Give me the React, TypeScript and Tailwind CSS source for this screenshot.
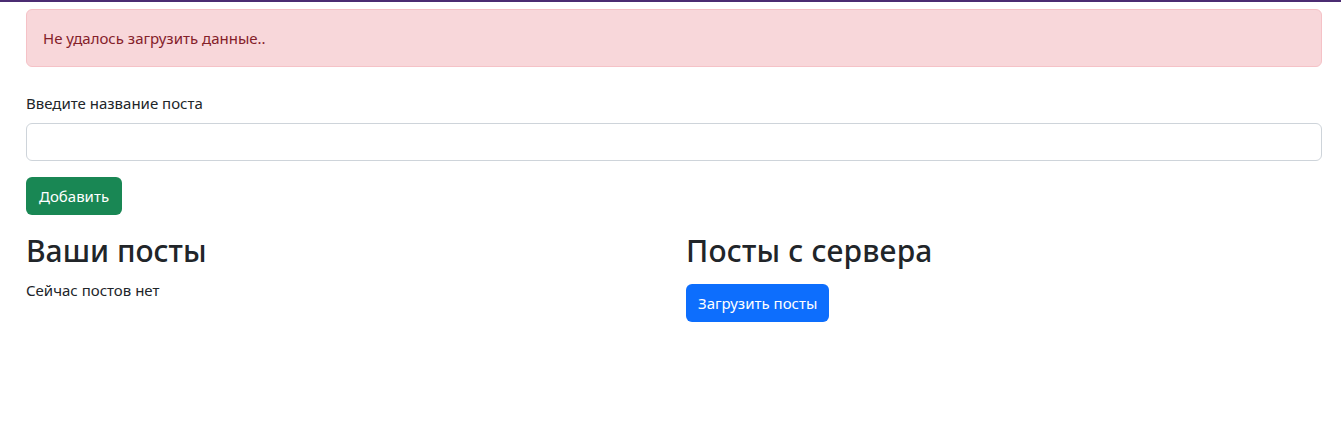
import React from "react";

export default function App() {
  return (
    <div
      className="min-h-[435px] bg-white text-[#212529] text-[15px] leading-6"
      style={{ fontFamily: '"Noto Sans", "Open Sans", sans-serif' }}
    >
      <div className="h-[2px] bg-[#4b2c72]" />
      <div className="pl-[26px] pr-[19px] pt-[7px]">
        <div className="rounded-[6px] border border-[#f5c2c7] bg-[#f8d7da] px-4 py-4 text-[#842029] mb-[16px]">
          Не удалось загрузить данные..
        </div>
        <div className="pt-[8px]">
          <label className="block mb-[8px]">Введите название поста</label>
          <input
            type="text"
            className="block w-full h-[38px] rounded-[6px] border border-[#ced4da] bg-white px-3 outline-none"
          />
          <button className="mt-[16px] h-[38px] rounded-[6px] bg-[#198754] px-[13px] text-white">
            Добавить
          </button>
        </div>
        <div className="mt-[17px] grid grid-cols-2 gap-x-[24px]">
          <div>
            <h2 className="text-[30px] leading-[38px] font-medium mb-[8px]">Ваши посты</h2>
            <p>Сейчас постов нет</p>
          </div>
          <div>
            <h2 className="text-[30px] leading-[38px] font-medium mb-[14px] tracking-[0.2px]">Посты с сервера</h2>
            <button className="h-[38px] rounded-[6px] bg-[#0d6efd] px-3 text-white">
              Загрузить посты
            </button>
          </div>
        </div>
      </div>
    </div>
  );
}
